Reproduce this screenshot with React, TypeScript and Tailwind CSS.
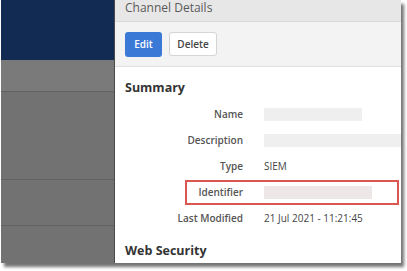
const rows = [
  { label: "Name", bar: "w-[98px] bg-[#efefef]" },
  { label: "Description", bar: "w-[160px] bg-[#efefef]" },
  { label: "Type", text: "SIEM" },
  { label: "Identifier", bar: "w-[108px] bg-[#ede7e7]", boxed: true },
  { label: "Last Modified", text: "21 Jul 2021 - 11:21:45" },
];

const App = () => {
  return (
    <div className="w-[407px] h-[271px] bg-white overflow-hidden" style={{ fontFamily: '"Open Sans", "Liberation Sans", sans-serif' }}>
      <div className="ml-[1px] w-[400px] h-[263px] flex shadow-[3px_4px_3px_rgba(0,0,0,0.55)]">
        {/* dimmed app behind the drawer */}
        <div className="w-[113px] shrink-0 flex flex-col">
          <div className="h-[60px] bg-[#112b52]" />
          <div className="h-[32px] bg-[#7a7a7a] border-b border-[#626262]" />
          <div className="h-[88px] bg-[#727272] border-b border-[#626262]" />
          <div className="h-[46px] bg-[#727272] border-b border-[#626262]" />
          <div className="flex-1 bg-[#727272]" />
        </div>
        <div className="flex-1 flex flex-col border-l border-[#4a4a4a] bg-white relative overflow-hidden">
          <div className="h-[22px] bg-[#e7e7e7] border-b border-[#d9d9d9] px-[10px] flex items-center">
            <span className="text-[12px] leading-[16px] text-[#5a5a5a] -mt-[6px]">Channel Details</span>
          </div>
          <div className="h-[45px] bg-[#f3f3f3] border-b border-[#e1e1e1] px-[10px] flex items-center gap-[7px]">
            <div className="w-[37px] h-[25px] rounded-[3px] bg-[#3b79d6] text-white text-[10px] font-semibold flex items-center justify-center">Edit</div>
            <div className="w-[48px] h-[24px] rounded-[3px] bg-white border border-[#d4d4d4] text-[#444] text-[10px] font-semibold flex items-center justify-center">Delete</div>
          </div>
          <div className="pt-[12px] flex flex-col">
            <div className="px-[10px] text-[12.5px] leading-[18px] font-bold text-[#333]">Summary</div>
            <div className="mt-[4px] flex flex-col">
              {rows.map((r) => (
                <div key={r.label} className="h-[26px] flex items-center relative">
                  <div className="w-[128px] shrink-0 text-right text-[10px] font-semibold text-[#555]">{r.label}</div>
                  <div className="ml-[21px] shrink-0 text-[10px] text-[#444] whitespace-nowrap">
                    {r.text ? r.text : <div className={`h-[13px] ${r.bar}`} />}
                  </div>
                  {r.boxed && <div className="absolute left-[70px] right-[2px] top-[1px] bottom-0 border-2 border-[#d9574f]" />}
                </div>
              ))}
            </div>
            <div className="mt-[11px] px-[10px] text-[12.5px] leading-[18px] font-bold text-[#333]">Web Security</div>
          </div>
        </div>
      </div>
    </div>
  );
};

export default App;
